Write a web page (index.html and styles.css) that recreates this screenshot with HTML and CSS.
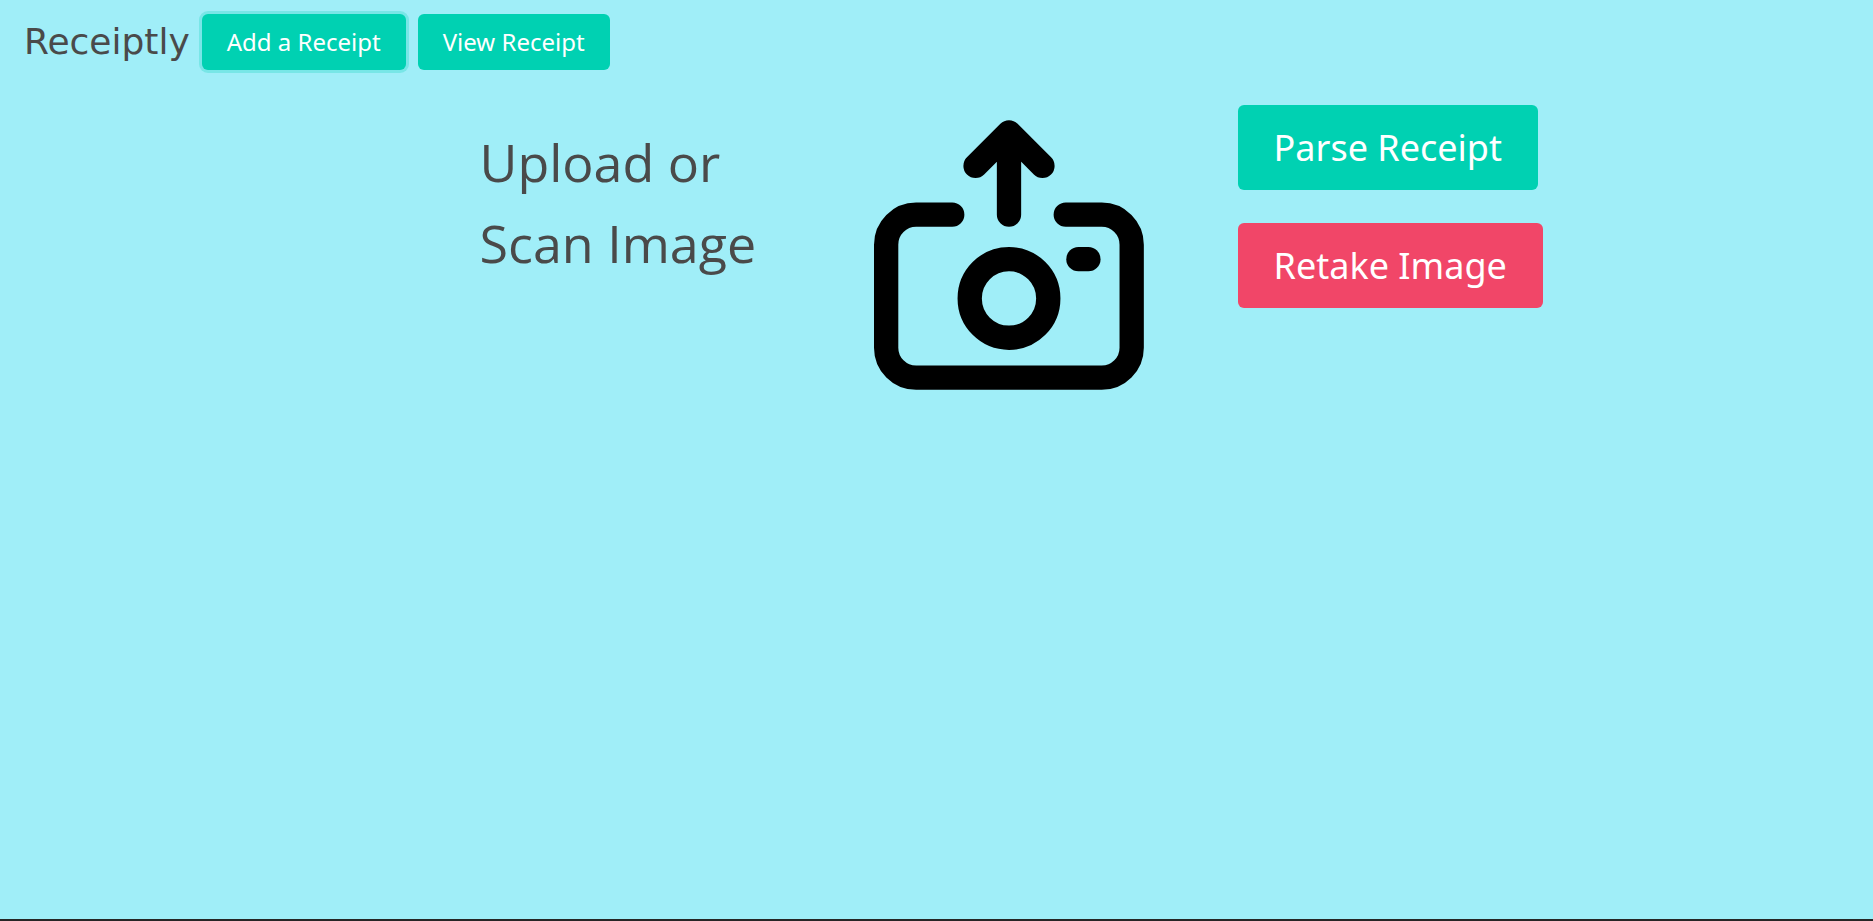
FILE: index.html
```
<!DOCTYPE html>
<html lang="en">
<head>
    <meta charset="UTF-8">
    <meta name="viewport" content="width=device-width, initial-scale=1.0">
    <title>Receiptly</title>
    <link rel="stylesheet" href="styles.css">
</head>
<body>
    <nav class="navbar">
        <span class="brand">Receiptly</span>
        <button type="button" class="button nav-button is-active">Add a Receipt</button>
        <button type="button" class="button nav-button">View Receipt</button>
    </nav>

    <main class="upload">
        <h1 class="upload-title">Upload or<br>Scan Image</h1>

        <div class="upload-icon">
            <svg viewBox="42 59 811 811" role="img" aria-label="Upload image">
                <path d="M277 343.5H168.5a90 90 0 0 0-90 90V743a90 90 0 0 0 90 90H726a90 90 0 0 0 90-90V433.5a90 90 0 0 0-90-90H618"/>
                <path d="M347 197 447.5 96 548 197M447.5 110V343.5"/>
                <circle cx="447.5" cy="595" r="118"/>
                <path d="M656 477h30"/>
            </svg>
        </div>

        <div class="actions">
            <button type="button" class="button action-button">Parse Receipt</button>
            <button type="button" class="button action-button is-danger">Retake Image</button>
        </div>
    </main>
</body>
</html>
```
FILE: styles.css
```
* { box-sizing: border-box; }
body { margin: 0; min-height: 100vh; background-color: #a0eef8; color: #4a4a4a; font-family: Tahoma, "Noto Sans", sans-serif; border-bottom: 2px solid #262626; }

.navbar { display: flex; align-items: center; gap: 12px; padding: 14px 24px; }
.brand { font-family: Tahoma, "DejaVu Sans", sans-serif; font-size: 36px; line-height: 54px; }

.button { border: 1px solid transparent; border-radius: 6px; background-color: #00d1b2; color: #fff; font-family: inherit; white-space: nowrap; cursor: pointer; }
.button:hover { background-color: #00c4a7; }
.nav-button { padding: 9px 24px; font-size: 24px; line-height: 36px; }
.is-active { box-shadow: 0 0 0 3px rgba(0, 209, 178, 0.25); }
.is-danger { background-color: #f14668; }
.is-danger:hover { background-color: #f03a5f; }

.upload { display: grid; grid-template-columns: repeat(3, 27.2%); align-items: start; margin-left: 25.6%; padding-top: 21px; }
.upload-title { margin: 16px 0 0; font-family: "Segoe UI", "Open Sans", sans-serif; font-size: 52px; font-weight: normal; line-height: 81px; white-space: nowrap; }
.upload-icon { padding: 15px; }
.upload-icon svg { display: block; width: 270px; height: 270px; fill: none; stroke: #000; stroke-width: 73; stroke-linecap: round; stroke-linejoin: round; }

.actions { display: flex; flex-direction: column; align-items: flex-start; gap: 33px; }
.action-button { padding: 15px 35px; font-size: 36px; line-height: 53px; }
```
